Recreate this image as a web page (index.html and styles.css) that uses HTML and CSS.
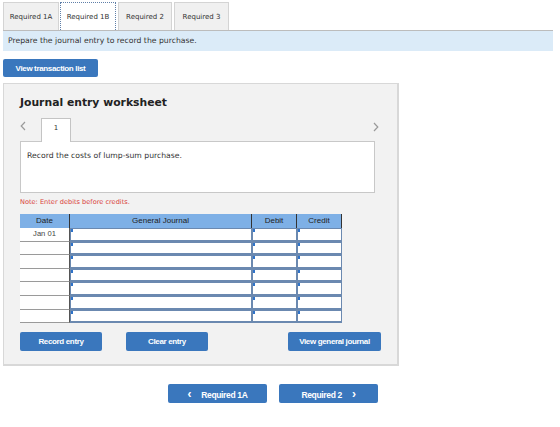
FILE: index.html
```html
<!DOCTYPE html>
<html lang="en">
<head>
  <meta charset="UTF-8" />
  <title>Journal entry worksheet</title>
  <link rel="stylesheet" href="styles.css">
</head>
<body>
  <div class="page">
    <div class="req-tabs">
      <div class="req-tab">Required 1A</div>
      <div class="req-tab active">Required 1B</div>
      <div class="req-tab">Required 2</div>
      <div class="req-tab">Required 3</div>
    </div>
    <div class="instruction">Prepare the journal entry to record the purchase.</div>

    <button class="btn list-btn">View transaction list</button>

    <div class="worksheet">
      <h2>Journal entry worksheet</h2>

      <div class="entry-nav">
        <svg class="chev" width="6" height="10" viewBox="0 0 6 10"><path d="M5 1 L1.2 5 L5 9" fill="none" stroke="#9a9a9a" stroke-width="1.2"/></svg>
        <div class="entry-tab">1</div>
        <svg class="chev right" width="6" height="10" viewBox="0 0 6 10"><path d="M1 1 L4.8 5 L1 9" fill="none" stroke="#9a9a9a" stroke-width="1.2"/></svg>
      </div>
      <div class="entry-box">Record the costs of lump-sum purchase.</div>

      <p class="note">Note: Enter debits before credits.</p>

      <div class="journal" id="journal">
        <div class="th">Date</div>
        <div class="th">General Journal</div>
        <div class="th">Debit</div>
        <div class="th">Credit</div>
      </div>

      <div class="actions">
        <div class="left-actions">
          <button class="btn act-btn">Record entry</button>
          <button class="btn act-btn">Clear entry</button>
        </div>
        <button class="btn act-btn wide">View general journal</button>
      </div>
    </div>

    <div class="bottom-nav">
      <button class="btn nav-btn"><span class="arr">&lsaquo;</span>Required 1A</button>
      <button class="btn nav-btn">Required 2<span class="arr after">&rsaquo;</span></button>
    </div>
  </div>

  <script>
    const journal = document.getElementById('journal');
    for (let i = 0; i < 7; i++) {
      const date = document.createElement('div');
      date.className = 'date-cell';
      date.textContent = i === 0 ? 'Jan 01' : '';
      journal.appendChild(date);
      for (let j = 0; j < 3; j++) {
        const cell = document.createElement('div');
        cell.className = 'in-cell';
        journal.appendChild(cell);
      }
    }
  </script>
</body>
</html>
```

FILE: styles.css
```css
:root {
  --btn-blue: #3a77bd;
  --head-blue: #7eb0e6;
  --cell-border: #6b89b0;
  --panel-bg: #f2f2f2;
}

body {
  margin: 0;
  font-family: 'DejaVu Sans', Verdana, sans-serif;
  color: #333;
  background: #fff;
}

.page {
  padding: 2px 7px 0 3px;
}

.req-tabs {
  display: flex;
  gap: 2px;
  height: 28px;
}

.req-tab {
  box-sizing: border-box;
  width: 54px;
  border: 1px solid #d4d4d4;
  border-bottom: none;
  background: #f0f0f0;
  font-size: 7px;
  color: #333;
  display: flex;
  align-items: center;
  justify-content: center;
}

.req-tab:nth-child(1) { width: 56px; margin-right: -1px; }
.req-tab:nth-child(2) { width: 56px; }
.req-tab:nth-child(4) { width: 55px; }

.req-tab.active {
  background: #fff;
  border: 1px dotted #5f7fa8;
  border-bottom: none;
}

.instruction {
  border-top: 1px solid #bcbcbc;
  background: #dbebf8;
  height: 20px;
  line-height: 20px;
  padding-left: 5px;
  font-size: 7.7px;
}

.btn {
  border: none;
  border-radius: 2px;
  background: var(--btn-blue);
  color: #fff;
  font-family: 'Liberation Sans', Arial, sans-serif;
  font-weight: bold;
  font-size: 8px;
  letter-spacing: -0.35px;
  padding: 0;
  cursor: pointer;
}

.list-btn {
  display: block;
  margin-top: 8px;
  width: 95px;
  height: 18px;
}

.worksheet {
  margin-top: 6px;
  width: 361px;
  height: 280px;
  padding: 0 16px;
  background: var(--panel-bg);
  border: 1px solid #d8d8d8;
  border-right-width: 2px;
  border-bottom-width: 2px;
}

.worksheet h2 {
  font-size: 10.8px;
  margin: 12px 0 0 0;
  color: #222;
  line-height: 14px;
}

.entry-nav {
  margin-top: 7px;
  height: 24px;
  display: flex;
  align-items: flex-start;
}

.chev {
  margin: 4px 15px 0 0;
}

.chev.right {
  margin: 5px 2px 0 auto;
}

.entry-tab {
  width: 30px;
  height: 24px;
  box-sizing: border-box;
  background: #fff;
  border: 1px solid #c4c4c4;
  border-bottom: none;
  font-size: 7px;
  text-align: center;
  line-height: 18px;
  position: relative;
  top: 1px;
  z-index: 1;
}

.entry-box {
  width: 347px;
  height: 50px;
  background: #fff;
  border: 1px solid #c8c8c8;
  padding-left: 6px;
  font-size: 7.7px;
  line-height: 28px;
}

.note {
  color: #d9413a;
  font-size: 6.6px;
  margin: 5px 0 0 0;
  height: 16px;
}

.journal {
  display: grid;
  grid-template-columns: 50px 182px 45px 45px;
  grid-template-rows: 14px repeat(7, 13.6px);
  width: 322px;
  font-family: 'Liberation Sans', Arial, sans-serif;
}

.th {
  background: var(--head-blue);
  border-right: 1px solid #333;
  font-size: 8px;
  color: #222;
  text-align: center;
  line-height: 14px;
}

.th:last-child {
  border-right: 1px solid #5f7fa8;
}

.date-cell {
  background: #fff;
  border-bottom: 1px solid #9a9a9a;
  border-right: 1px solid #555;
  font-size: 7.6px;
  text-align: center;
  line-height: 12px;
  color: #444;
}

.in-cell {
  background: #fff;
  border: 1px solid var(--cell-border);
  border-bottom-width: 2px;
  position: relative;
  box-sizing: border-box;
}

.in-cell::before {
  content: "";
  position: absolute;
  left: 0;
  top: 0;
  width: 2px;
  height: 3px;
  background: #2f73c9;
}

.actions {
  display: flex;
  justify-content: space-between;
  margin-top: 9px;
}

.left-actions {
  display: flex;
  gap: 24px;
}

.act-btn {
  width: 82px;
  height: 19px;
}

.act-btn.wide {
  width: 93px;
}

.bottom-nav {
  display: flex;
  gap: 12px;
  margin: 18px 0 0 165px;
}

.nav-btn {
  width: 99px;
  height: 19px;
  font-size: 8.5px;
}

.arr {
  font-size: 12px;
  margin-right: 10px;
  position: relative;
  top: 0.5px;
}

.arr.after {
  margin: 0 0 0 10px;
}
```
